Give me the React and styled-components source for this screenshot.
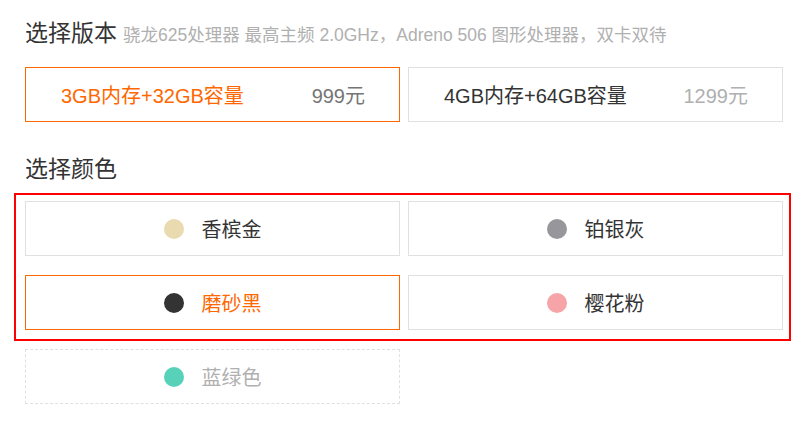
import React from 'react';
import styled, { createGlobalStyle } from 'styled-components';

const GlobalStyle = createGlobalStyle`
  body {
    margin: 0;
    background: #fff;
    font-family: "Liberation Sans", "Noto Sans CJK SC", sans-serif;
    color: #333;
  }
`;

const Page = styled.div`
  width: 805px;
  padding: 16px 25px 0;
  box-sizing: border-box;
`;

const Title = styled.div`
  display: flex;
  align-items: baseline;
  height: 34px;
  line-height: 34px;
  font-size: 23px;
  color: #333;
  margin-top: ${(p) => p.$top || 0}px;
`;

const SubTitle = styled.span`
  margin-left: 6px;
  font-size: 17.5px;
  color: #b0b0b0;
`;

const Grid = styled.div`
  display: grid;
  grid-template-columns: 375px 375px;
  column-gap: 8px;
  row-gap: 19px;
  margin-top: ${(p) => p.$top || 0}px;
`;

const Highlight = styled(Grid)`
  position: relative;

  &::after {
    content: '';
    position: absolute;
    top: -8px;
    left: -11px;
    right: -11px;
    bottom: -11px;
    border: 2px solid #f00;
    pointer-events: none;
  }
`;

const VersionBox = styled.div`
  display: flex;
  align-items: center;
  justify-content: space-between;
  height: 55px;
  padding: 0 34px 0 35px;
  box-sizing: border-box;
  border: 1px solid ${(p) => (p.$active ? '#ff6700' : '#e0e0e0')};
  font-size: 20px;
  color: ${(p) => (p.$active ? '#ff6700' : '#333')};
`;

const Price = styled.span`
  color: ${(p) => (p.$active ? '#757575' : '#b0b0b0')};
`;

const ColorBox = styled.div`
  display: flex;
  align-items: center;
  justify-content: center;
  gap: 18px;
  height: 55px;
  box-sizing: border-box;
  border: 1px ${(p) => (p.$disabled ? 'dashed' : 'solid')}
    ${(p) => (p.$active ? '#ff6700' : '#e0e0e0')};
  font-size: 20px;
  color: ${(p) => (p.$active ? '#ff6700' : p.$disabled ? '#b0b0b0' : '#333')};
`;

const Dot = styled.span`
  width: 20px;
  height: 20px;
  border-radius: 50%;
  background: ${(p) => p.$color};
  flex: none;
`;

const versions = [
  { name: '3GB内存+32GB容量', price: '999元', active: true },
  { name: '4GB内存+64GB容量', price: '1299元' },
];

const colors = [
  { name: '香槟金', color: '#e9dbaf' },
  { name: '铂银灰', color: '#97979b' },
  { name: '磨砂黑', color: '#333333', active: true },
  { name: '樱花粉', color: '#f7a4a8' },
];

function ColorOption({ item }) {
  return (
    <ColorBox $active={item.active} $disabled={item.disabled}>
      <Dot $color={item.color} />
      {item.name}
    </ColorBox>
  );
}

export default function App() {
  return (
    <Page>
      <GlobalStyle />
      <Title>
        选择版本
        <SubTitle>骁龙625处理器 最高主频 2.0GHz，Adreno 506 图形处理器，双卡双待</SubTitle>
      </Title>
      <Grid $top={17}>
        {versions.map((v) => (
          <VersionBox key={v.name} $active={v.active}>
            <span>{v.name}</span>
            <Price $active={v.active}>{v.price}</Price>
          </VersionBox>
        ))}
      </Grid>
      <Title $top={30}>选择颜色</Title>
      <Highlight $top={15}>
        {colors.map((c) => (
          <ColorOption key={c.name} item={c} />
        ))}
      </Highlight>
      <Grid $top={19}>
        <ColorOption item={{ name: '蓝绿色', color: '#58d1b9', disabled: true }} />
      </Grid>
    </Page>
  );
}
